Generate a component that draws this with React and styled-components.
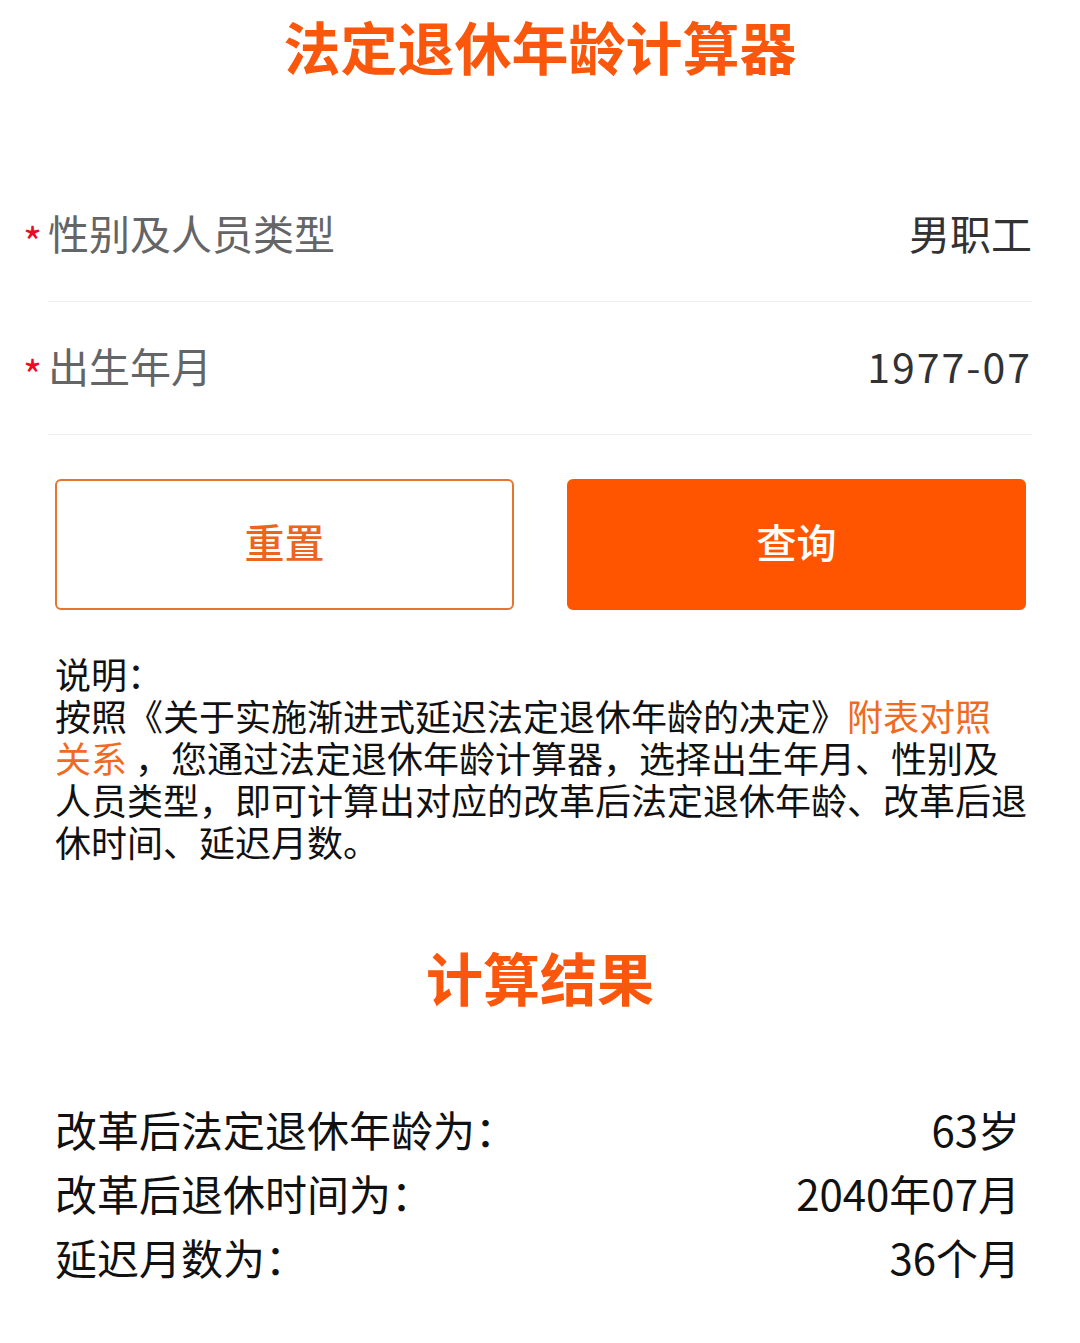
import React from 'react';
import styled, { createGlobalStyle } from 'styled-components';

const GlobalStyle = createGlobalStyle`
  *, *::before, *::after {
    box-sizing: border-box;
  }
  body {
    margin: 0;
    background: #fff;
    font-family: "Noto Sans CJK SC", "Noto Sans", sans-serif;
  }
`;

const Page = styled.div`
  width: 1080px;
  padding-bottom: 40px;
`;

const Heading = styled.h1`
  margin: ${({ top }) => top}px 0 0;
  font-size: 57px;
  line-height: 56px;
  font-weight: 700;
  text-align: center;
  color: #fa570c;
`;

const Form = styled.div`
  margin-top: 96px;
`;

const Cell = styled.div`
  display: flex;
  align-items: center;
  justify-content: space-between;
  height: 133px;
  margin: 0 48px;
  padding-bottom: 6px;
  border-bottom: 1px solid #ebedf0;
  font-size: 41px;
`;

const Label = styled.div`
  display: flex;
  align-items: center;
  color: #646566;
`;

const Required = styled.span`
  width: 25px;
  margin-left: -25px;
  padding-top: 16px;
  font-size: 41px;
  line-height: 1;
  color: #ee0a24;
`;

const Value = styled.div`
  color: #323233;
  letter-spacing: ${({ spaced }) => (spaced ? '2px' : '0')};
`;

const Actions = styled.div`
  display: grid;
  grid-template-columns: 1fr 1fr;
  gap: 53px;
  margin: 44px 54px 0 55px;
`;

const Button = styled.button`
  height: 131px;
  padding: 0 0 8px;
  border-radius: 6px;
  font-family: inherit;
  font-size: 40px;
  font-weight: 500;
  cursor: pointer;
  border: 2px solid ${({ primary }) => (primary ? '#ff5500' : '#e5762f')};
  background: ${({ primary }) => (primary ? '#ff5500' : '#fff')};
  color: ${({ primary }) => (primary ? '#fff' : '#ec651d')};
`;

const Note = styled.p`
  margin: 42px 0 0;
  padding: 0 20px 0 55px;
  font-size: 36px;
  line-height: 42px;
  color: #111;
`;

const Link = styled.a`
  color: #f06a1f;
  text-decoration: none;
`;

const Results = styled.div`
  margin-top: 93px;
  padding: 0 60px 0 55px;
`;

const ResultRow = styled.div`
  display: flex;
  justify-content: space-between;
  font-size: 42px;
  line-height: 64px;
  color: #111;
`;

const fields = [
  { label: '性别及人员类型', value: '男职工' },
  { label: '出生年月', value: '1977-07', numeric: true },
];

const results = [
  { label: '改革后法定退休年龄为：', value: '63岁' },
  { label: '改革后退休时间为：', value: '2040年07月' },
  { label: '延迟月数为：', value: '36个月' },
];

export default function App() {
  return (
    <Page>
      <GlobalStyle />
      <Heading top={17}>法定退休年龄计算器</Heading>

      <Form>
        {fields.map((f) => (
          <Cell key={f.label}>
            <Label>
              <Required>*</Required>
              {f.label}
            </Label>
            <Value spaced={f.numeric}>{f.value}</Value>
          </Cell>
        ))}
      </Form>

      <Actions>
        <Button type="button">重置</Button>
        <Button type="button" primary>
          查询
        </Button>
      </Actions>

      <Note>
        说明：
        <br />
        按照《关于实施渐进式延迟法定退休年龄的决定》
        <Link>附表对照</Link>
        <br />
        <Link>关系</Link> ，您通过法定退休年龄计算器，选择出生年月、性别及
        <br />
        人员类型，即可计算出对应的改革后法定退休年龄、改革后退
        <br />
        休时间、延迟月数。
      </Note>

      <Heading top={86}>计算结果</Heading>

      <Results>
        {results.map((r) => (
          <ResultRow key={r.label}>
            <span>{r.label}</span>
            <span>{r.value}</span>
          </ResultRow>
        ))}
      </Results>
    </Page>
  );
}
